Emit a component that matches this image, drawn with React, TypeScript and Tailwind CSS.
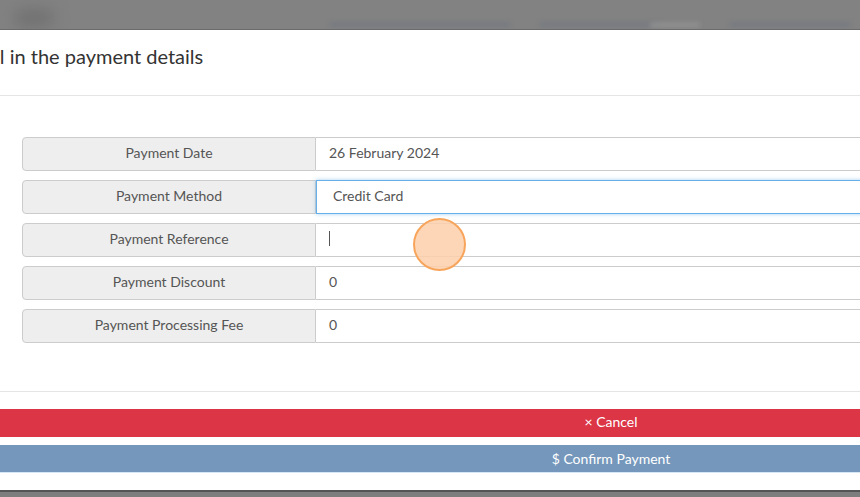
import React from 'react';

interface FieldRow {
  label: string;
  value: string;
  focused?: boolean;
  caret?: boolean;
}

const ROWS: FieldRow[] = [
  { label: 'Payment Date', value: '26 February 2024' },
  { label: 'Payment Method', value: 'Credit Card', focused: true },
  { label: 'Payment Reference', value: '', caret: true },
  { label: 'Payment Discount', value: '0' },
  { label: 'Payment Processing Fee', value: '0' },
];

export default function App() {
  return (
    <div
      className="relative h-[497px] w-[860px] overflow-hidden bg-white"
      style={{ fontFamily: 'Lato, "Open Sans", sans-serif' }}
    >
      {/* dimmed page behind the modal */}
      <div className="relative h-[30px] overflow-hidden border-b border-[#6b6b6b] bg-[#828282]">
        <div className="absolute top-[10px] left-[14px] h-[16px] w-[40px] rounded-full bg-[#6f6f6f] blur-sm" />
        <div className="absolute top-[22px] left-[330px] h-[5px] w-[180px] bg-[#767a80] blur-[2px]" />
        <div className="absolute top-[22px] left-[540px] h-[5px] w-[120px] bg-[#767a80] blur-[2px]" />
        <div className="absolute top-[22px] left-[650px] h-[6px] w-[50px] bg-[#8e8e8e] blur-[2px]" />
        <div className="absolute top-[22px] left-[730px] h-[5px] w-[120px] bg-[#767a80] blur-[2px]" />
      </div>

      <div className="flex h-[460px] flex-col bg-white">
        <div className="flex h-[66px] items-center border-b border-[#e5e5e5]">
          <h4 className="-mt-[14px] -ml-[21px] text-[20px] whitespace-nowrap text-[#333]">
            Fill in the payment details
          </h4>
        </div>

        <div className="flex flex-col gap-[9px] pt-[41px] pb-[48px] pl-[22px]">
          {ROWS.map((r) => (
            <Row key={r.label} row={r} />
          ))}
        </div>

        <div className="-ml-[10px] flex w-[1242px] flex-col gap-[8px] border-t border-[#e5e5e5] pt-[17px]">
          <button className="h-[28px] bg-[#dc3545] pb-[3px] text-[14px] text-white">
            × Cancel
          </button>
          <button className="h-[28px] border-b border-[#d6e6f5] bg-[#7597bb] text-[14px] text-white">
            $ Confirm Payment
          </button>
        </div>
      </div>

      <div className="h-[7px] border-t-2 border-[#555] bg-[#7e7e7e]" />

      {/* click indicator */}
      <div className="absolute top-[218px] left-[413px] h-[53px] w-[53px] rounded-full border-2 border-[#f8a55c] bg-[#fbcfaa]/85" />
    </div>
  );
}

function Row({ row }: { row: FieldRow }) {
  return (
    <div className="flex h-[34px] w-[900px] text-[14px] text-[#555]">
      <div className="flex w-[294px] shrink-0 items-center justify-center rounded-l-[4px] border border-[#ccc] bg-[#eee] pb-[3px]">
        {row.label}
      </div>
      <div
        className={
          row.focused
            ? 'flex flex-1 items-center border border-[#66afe9] bg-white pb-[3px] pl-[16px] shadow-[0_0_4px_rgba(102,175,233,0.6)]'
            : 'flex flex-1 items-center border border-l-0 border-[#ccc] bg-white pb-[3px] pl-[13px]'
        }
      >
        {row.caret ? <span className="h-[15px] w-px bg-[#555]" /> : row.value}
      </div>
    </div>
  );
}
